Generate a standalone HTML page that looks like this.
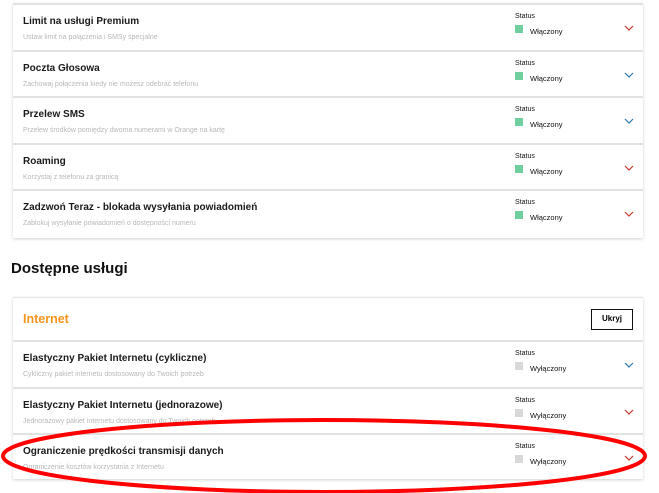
<!DOCTYPE html>
<html><head><meta charset="utf-8"><style>
*{margin:0;padding:0;box-sizing:border-box}
body{width:659px;height:493px;background:#fff;font-family:"Liberation Sans",Arial,sans-serif;position:relative;overflow:hidden}
.card{position:absolute;left:13px;width:630px;background:#fff;box-shadow:0 1px 3px rgba(0,0,0,.18)}
.row{position:relative;height:46.5px;border-top:2px solid #e2e2e2}
.t{position:absolute;left:10px;top:11px;font-size:10px;font-weight:bold;color:#1a1a1a}
.d{position:absolute;left:10px;top:29px;font-size:7px;color:#b8b8b8}
.s{position:absolute;left:502px;top:8px;font-size:7px;color:#111}
.b{position:absolute;left:502px;top:20px;width:8px;height:8px;background:#6fcf9f}
.off .b{background:#d9d9d9}
.l{position:absolute;left:517px;top:22px;font-size:7.5px;color:#111}
.c{position:absolute;left:611px;top:20px}
</style></head><body>
<div class="card" style="top:3px;height:235px">
<div class="row"><div class="t">Limit na usługi Premium</div><div class="d">Ustaw limit na połączenia i SMSy specjalne</div><div class="s">Status</div><div class="b"></div><div class="l">Włączony</div><svg class="c" width="10" height="6"><path d="M1 1L5 5L9 1" fill="none" stroke="#c0392b" stroke-width="1.2"/></svg></div>
<div class="row"><div class="t">Poczta Głosowa</div><div class="d">Zachowaj połączenia kiedy nie możesz odebrać telefonu</div><div class="s">Status</div><div class="b"></div><div class="l">Włączony</div><svg class="c" width="10" height="6"><path d="M1 1L5 5L9 1" fill="none" stroke="#2a7ab0" stroke-width="1.2"/></svg></div>
<div class="row"><div class="t">Przelew SMS</div><div class="d">Przelew środków pomiędzy dwoma numerami w Orange na kartę</div><div class="s">Status</div><div class="b"></div><div class="l">Włączony</div><svg class="c" width="10" height="6"><path d="M1 1L5 5L9 1" fill="none" stroke="#2a7ab0" stroke-width="1.2"/></svg></div>
<div class="row"><div class="t">Roaming</div><div class="d">Korzystaj z telefonu za granicą</div><div class="s">Status</div><div class="b"></div><div class="l">Włączony</div><svg class="c" width="10" height="6"><path d="M1 1L5 5L9 1" fill="none" stroke="#c0392b" stroke-width="1.2"/></svg></div>
<div class="row"><div class="t">Zadzwoń Teraz - blokada wysyłania powiadomień</div><div class="d">Zablokuj wysyłanie powiadomień o dostępności numeru</div><div class="s">Status</div><div class="b"></div><div class="l">Włączony</div><svg class="c" width="10" height="6"><path d="M1 1L5 5L9 1" fill="none" stroke="#c0392b" stroke-width="1.2"/></svg></div>
</div>
<div style="position:absolute;left:11px;top:260px;font-size:15px;font-weight:bold;color:#111">Dostępne usługi</div>
<div class="card" style="top:297px;height:182px">
<div style="position:relative;height:43px;border-top:1px solid #e6e6e6"><div style="position:absolute;left:10px;top:14px;font-size:12.5px;font-weight:bold;color:#f7941d">Internet</div><div style="position:absolute;left:578px;top:11px;width:42px;height:21px;border:1.5px solid #111;font-size:8px;font-weight:bold;text-align:center;line-height:18px">Ukryj</div></div>
<div class="row off"><div class="t">Elastyczny Pakiet Internetu (cykliczne)</div><div class="d">Cykliczny pakiet internetu dostosowany do Twoich potrzeb</div><div class="s">Status</div><div class="b"></div><div class="l">Wyłączony</div><svg class="c" width="10" height="6"><path d="M1 1L5 5L9 1" fill="none" stroke="#2a7ab0" stroke-width="1.2"/></svg></div>
<div class="row off"><div class="t">Elastyczny Pakiet Internetu (jednorazowe)</div><div class="d">Jednorazowy pakiet internetu dostosowany do Twoich potrzeb</div><div class="s">Status</div><div class="b"></div><div class="l">Wyłączony</div><svg class="c" width="10" height="6"><path d="M1 1L5 5L9 1" fill="none" stroke="#c0392b" stroke-width="1.2"/></svg></div>
<div class="row off"><div class="t">Ograniczenie prędkości transmisji danych</div><div class="d">Ograniczenie kosztów korzystania z Internetu</div><div class="s">Status</div><div class="b"></div><div class="l">Wyłączony</div><svg class="c" width="10" height="6"><path d="M1 1L5 5L9 1" fill="none" stroke="#c0392b" stroke-width="1.2"/></svg></div>
</div>
<svg style="position:absolute;left:0;top:0" width="659" height="493"><ellipse cx="324" cy="456" rx="321" ry="36" fill="none" stroke="#f00" stroke-width="4"/></svg>
</body></html>
